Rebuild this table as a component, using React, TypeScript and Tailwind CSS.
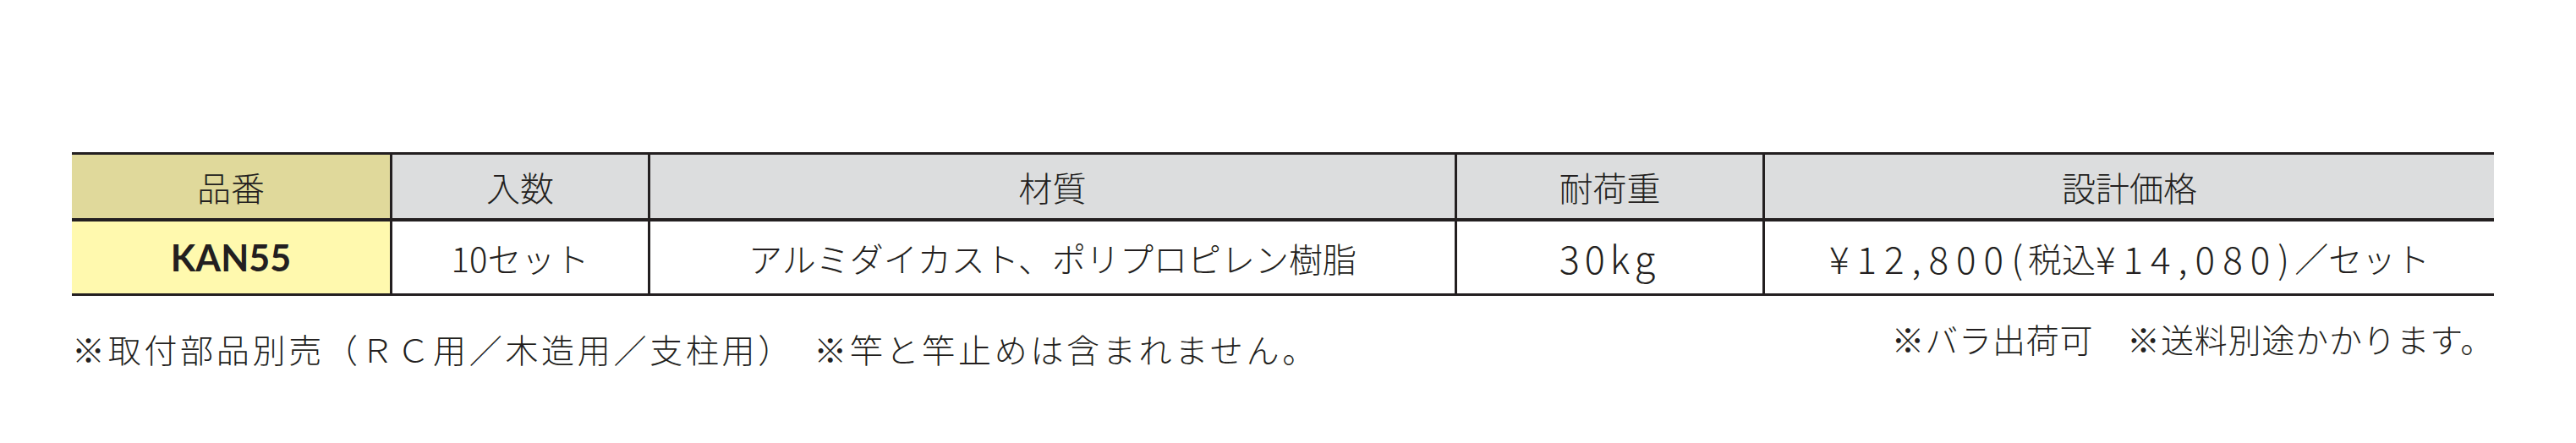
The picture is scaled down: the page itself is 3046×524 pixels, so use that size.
export default function App() {
  const headers = ["入数", "材質", "耐荷重", "設計価格"];

  return (
    <div className="w-[3046px] h-[524px] bg-white text-[#231f20] font-light font-['Noto_Sans_CJK_JP',sans-serif]">
      <div className="ml-[85px] w-[2864px] pt-[180px]">
        {/* spec table */}
        <div className="grid grid-cols-[376px_305px_954px_364px_865px] border-t-[3px] border-b-[3px] border-[#231f20]">
          <div className="h-[79px] flex items-center justify-center bg-[#e0d99b] text-[40px] leading-none border-b-4 border-[#231f20]">
            品番
          </div>
          {headers.map((h) => (
            <div
              key={h}
              className="h-[79px] flex items-center justify-center bg-[#dcddde] text-[40px] leading-none border-b-4 border-l-[3px] border-[#231f20]"
            >
              {h}
            </div>
          ))}

          <div className="h-[85px] flex items-center justify-center bg-[#fff9ae] text-[43px] leading-none font-bold font-['Lato',sans-serif]">
            KAN55
          </div>
          <div className="h-[85px] flex items-center justify-center text-[40px] leading-none border-l-[3px] border-[#231f20]">
            10セット
          </div>
          <div className="h-[85px] flex items-center justify-center text-[40px] leading-none border-l-[3px] border-[#231f20]">
            アルミダイカスト、ポリプロピレン樹脂
          </div>
          <div className="h-[85px] flex items-center justify-center text-[45px] leading-none tracking-[6px] border-l-[3px] border-[#231f20]">
            30kg
          </div>
          <div className="h-[85px] flex items-center justify-center text-[40px] leading-none border-l-[3px] border-[#231f20]">
            <span className="text-[44px] tracking-[9px]">¥12,800</span>
            <span className="text-[44px] mr-[6px]">(</span>
            <span>税込</span>
            <span className="text-[44px] tracking-[9px]">¥14,080</span>
            <span className="text-[44px] mr-[6px]">)</span>
            <span>／</span>
            <span>セット</span>
          </div>
        </div>

        {/* notes */}
        <div className="flex justify-between items-start mt-[30px]">
          <p className="mt-[12px] text-[39px] leading-[40px] tracking-[3.7px]">
            ※取付部品別売（ＲＣ用／木造用／支柱用）　※竿と竿止めは含まれません。
          </p>
          <p className="text-[39px] leading-[40px] tracking-[0.8px]">※バラ出荷可　※送料別途かかります。</p>
        </div>
      </div>
    </div>
  );
}
